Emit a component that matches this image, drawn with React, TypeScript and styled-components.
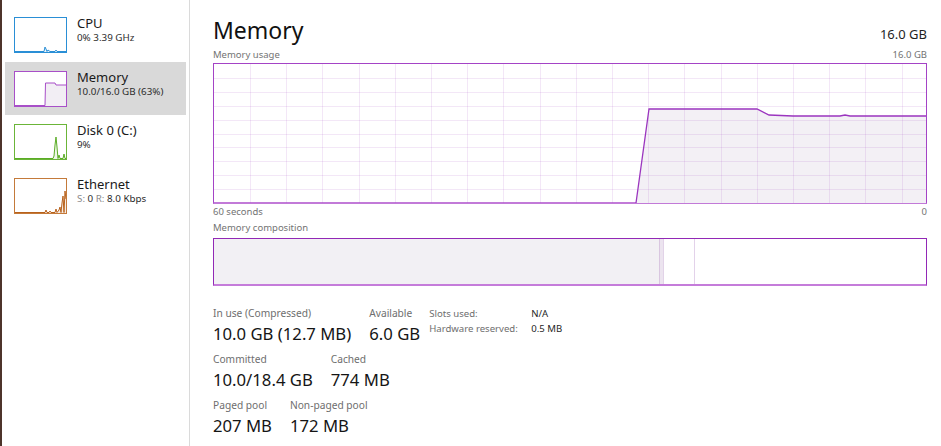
import styled, { createGlobalStyle } from 'styled-components';

const GlobalStyle = createGlobalStyle`
  html, body {
    margin: 0;
    padding: 0;
    background: #ffffff;
  }
  body {
    font-family: 'Noto Sans', 'Liberation Sans', sans-serif;
    color: #1b1b1b;
  }
`;

const Window = styled.div`
  display: flex;
  width: 941px;
  height: 446px;
  overflow: hidden;
  background: #ffffff;
`;

const Sidebar = styled.nav`
  flex: none;
  width: 187px;
  border-left: 2px solid #4d342b;
  border-right: 1px solid #dadada;
  padding-top: 8px;
  display: flex;
  flex-direction: column;
`;

const NavItem = styled.div<{ $active?: boolean }>`
  display: flex;
  align-items: flex-start;
  height: 53.5px;
  margin: 0 3px;
  padding: 7px 0 0 9px;
  box-sizing: border-box;
  background: ${(p) => (p.$active ? '#d9d9d9' : 'transparent')};
`;

const Thumb = styled.div<{ $color: string }>`
  flex: none;
  width: 53px;
  height: 36px;
  margin-top: 2px;
  box-sizing: border-box;
  border: 1px solid ${(p) => p.$color};
  background: #ffffff;

  svg {
    display: block;
  }
`;

const NavText = styled.div`
  margin-left: 10px;
  display: flex;
  flex-direction: column;
`;

const NavTitle = styled.div`
  font-size: 13px;
  line-height: 16px;
  color: #1a1a1a;
`;

const NavSub = styled.div`
  font-size: 9.8px;
  line-height: 14px;
  color: #2b2b2b;
  white-space: nowrap;
`;

const Dim = styled.span`
  color: #8a8a8a;
`;

const Main = styled.main`
  flex: 1;
  min-width: 0;
  padding: 14px 14px 0 23px;
  display: flex;
  flex-direction: column;
`;

const Header = styled.div`
  display: flex;
  justify-content: space-between;
  align-items: baseline;
  height: 32px;
`;

const Title = styled.h1`
  margin: 0;
  font-size: 23px;
  font-weight: 400;
  line-height: 32px;
  color: #111111;
`;

const Total = styled.div`
  font-size: 13px;
  color: #1f1f1f;
`;

const CaptionRow = styled.div<{ $top: number }>`
  display: flex;
  justify-content: space-between;
  margin-top: ${(p) => p.$top}px;
  font-size: 9.5px;
  line-height: 13px;
  color: #737373;
`;

const GraphFrame = styled.div`
  margin-top: 2px;
  height: 141px;
  box-sizing: border-box;
  border: 1px solid #a443c6;
  border-bottom: 2px solid #c27ad8;

  svg {
    display: block;
  }
`;

const CompBar = styled.div`
  display: flex;
  margin-top: 4px;
  height: 48px;
  box-sizing: border-box;
  border: 1px solid #9228b6;
  border-bottom: 2px solid #c57cda;
`;

const Segment = styled.div<{ $width?: number; $fill: string; $edge?: string }>`
  flex: ${(p) => (p.$width ? `0 0 ${p.$width}px` : '1')};
  background: ${(p) => p.$fill};
  border-right: ${(p) => (p.$edge ? `1px solid ${p.$edge}` : 'none')};
`;

const Stats = styled.div`
  margin-top: 19.5px;
  display: flex;
  flex-direction: column;
  gap: 6px;
`;

const StatRow = styled.div`
  display: flex;
  align-items: flex-start;
`;

const StatCol = styled.div`
  display: flex;
  flex-direction: column;

  & + & {
    margin-left: 18px;
  }
`;

const StatLabel = styled.div`
  font-size: 10.2px;
  line-height: 15px;
  color: #6e6e6e;
  white-space: nowrap;
`;

const StatValue = styled.div`
  margin-top: 1px;
  font-size: 16.7px;
  line-height: 24px;
  color: #151515;
  white-space: nowrap;
`;

const SideInfo = styled.div`
  margin-left: 9px;
  display: grid;
  grid-template-columns: 102px auto;
  font-size: 9.6px;
  line-height: 15px;
  white-space: nowrap;
`;

const SideKey = styled.span`
  color: #6e6e6e;
`;

const SideVal = styled.span`
  color: #1f1f1f;
`;

type Spark = { color: string; fill: string; points: string };

function Sparkline({ color, fill, points }: Spark) {
  return (
    <svg width={51} height={34} viewBox="0 0 51 34">
      <polygon points={`0,34 ${points} 51,34`} fill={fill} />
      <polyline points={points} fill="none" stroke={color} strokeWidth={1} />
    </svg>
  );
}

const devices = [
  {
    name: 'CPU',
    sub: <>0% 3.39 GHz</>,
    border: '#2a8fd6',
    spark: {
      color: '#2a8fd6',
      fill: '#e8f3fb',
      points: '0,33.5 29,33.5 30,29 31,31 32,33.5 33,32 35,33.5 40,33.5 41,32 42,33.5 51,33.5',
    },
  },
  {
    name: 'Memory',
    sub: <>10.0/16.0 GB (63%)</>,
    border: '#a84fc8',
    active: true,
    spark: {
      color: '#a84fc8',
      fill: '#f2eef4',
      points: '0,33.5 30,33.5 30.5,11 40,11 41,13 51,13',
    },
  },
  {
    name: 'Disk 0 (C:)',
    sub: <>9%</>,
    border: '#6bb538',
    spark: {
      color: '#5aac25',
      fill: '#eef7e8',
      points: '0,33.5 38,33.5 39,31 40,20 41,12 42,22 43,33.5 44,30 45,33.5 48,33.5 49,29 50,33.5 51,33.5',
    },
  },
  {
    name: 'Ethernet',
    sub: (
      <>
        <Dim>S:</Dim> 0 <Dim>R:</Dim> 8.0 Kbps
      </>
    ),
    border: '#c47a3a',
    spark: {
      color: '#b8621c',
      fill: '#f7ece3',
      points: '0,33.5 30,33.5 31,31 32,33.5 34,33.5 35,32 36,33.5 40,33.5 41,30 42,33.5 44,31 45,28 46,33.5 47,24 48,17 49,33.5 50,12 51,20',
    },
  },
];

// usage graph: 712 x 139 inner area, values in px from the frame's inner corner
const GRAPH_W = 712;
const GRAPH_H = 139;
const usage = '422,139 435,45 543,45 555,51 579,52 626,52 631,51 636,52 712,52';

function UsageGraph() {
  const cols = Array.from({ length: 19 }, (_, k) => Math.round(36 + 36.2 * k) + 0.5);
  const rows = Array.from({ length: 9 }, (_, k) => Math.round(13.9 * (k + 1)) + 0.5);
  return (
    <svg width={GRAPH_W} height={GRAPH_H} viewBox={`0 0 ${GRAPH_W} ${GRAPH_H}`}>
      <polygon points={`${usage} ${GRAPH_W},${GRAPH_H} 422,${GRAPH_H}`} fill="#f3f0f5" />
      <g stroke="rgba(160, 70, 190, 0.13)" strokeWidth={1} shapeRendering="crispEdges">
        {cols.map((x) => (
          <line key={`c${x}`} x1={x} y1={0} x2={x} y2={GRAPH_H} />
        ))}
        {rows.map((y) => (
          <line key={`r${y}`} x1={0} y1={y} x2={GRAPH_W} y2={y} />
        ))}
      </g>
      <polyline points={usage} fill="none" stroke="#9b35bf" strokeWidth={1.3} />
    </svg>
  );
}

export default function App(): JSX.Element {
  return (
    <Window>
      <GlobalStyle />
      <Sidebar>
        {devices.map((d) => (
          <NavItem key={d.name} $active={d.active}>
            <Thumb $color={d.border}>
              <Sparkline {...d.spark} />
            </Thumb>
            <NavText>
              <NavTitle>{d.name}</NavTitle>
              <NavSub>{d.sub}</NavSub>
            </NavText>
          </NavItem>
        ))}
      </Sidebar>

      <Main>
        <Header>
          <Title>Memory</Title>
          <Total>16.0 GB</Total>
        </Header>

        <CaptionRow $top={2}>
          <span>Memory usage</span>
          <span>16.0 GB</span>
        </CaptionRow>
        <GraphFrame>
          <UsageGraph />
        </GraphFrame>
        <CaptionRow $top={1}>
          <span>60 seconds</span>
          <span>0</span>
        </CaptionRow>

        <CaptionRow $top={3}>
          <span>Memory composition</span>
        </CaptionRow>
        <CompBar>
          <Segment $width={445} $fill="#f2f0f4" $edge="#d9c6e0" />
          <Segment $width={3} $fill="#ece4ef" $edge="#e2d3e8" />
          <Segment $width={30} $fill="#ffffff" $edge="#e3d2ea" />
          <Segment $fill="#ffffff" />
        </CompBar>

        <Stats>
          <StatRow>
            <StatCol>
              <StatLabel>In use (Compressed)</StatLabel>
              <StatValue>10.0 GB (12.7 MB)</StatValue>
            </StatCol>
            <StatCol>
              <StatLabel>Available</StatLabel>
              <StatValue>6.0 GB</StatValue>
            </StatCol>
            <SideInfo>
              <SideKey>Slots used:</SideKey>
              <SideVal>N/A</SideVal>
              <SideKey>Hardware reserved:</SideKey>
              <SideVal>0.5 MB</SideVal>
            </SideInfo>
          </StatRow>
          <StatRow>
            <StatCol>
              <StatLabel>Committed</StatLabel>
              <StatValue>10.0/18.4 GB</StatValue>
            </StatCol>
            <StatCol>
              <StatLabel>Cached</StatLabel>
              <StatValue>774 MB</StatValue>
            </StatCol>
          </StatRow>
          <StatRow>
            <StatCol>
              <StatLabel>Paged pool</StatLabel>
              <StatValue>207 MB</StatValue>
            </StatCol>
            <StatCol>
              <StatLabel>Non-paged pool</StatLabel>
              <StatValue>172 MB</StatValue>
            </StatCol>
          </StatRow>
        </Stats>
      </Main>
    </Window>
  );
}
